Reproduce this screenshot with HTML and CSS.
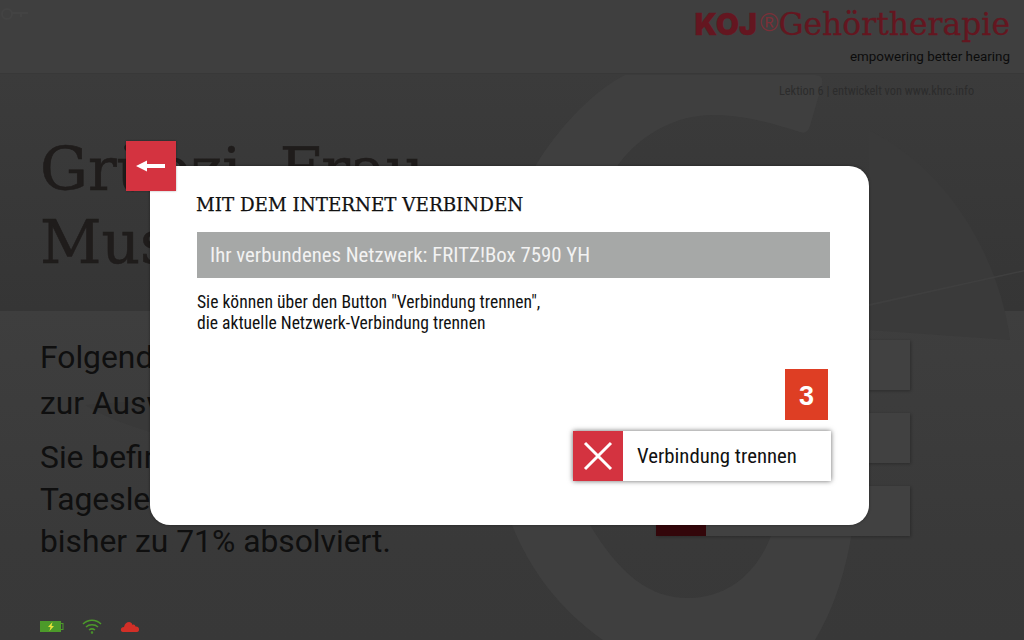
FILE: index.html
```html
<!doctype html>
<html>
  <head>
    <meta charset=utf-8>
    <title>Internet</title>
    <link rel="stylesheet" href="styles.css">
  </head>
  <body>
    <div class=screen>
      <svg class=backdrop viewBox="0 0 1024 640">
        <defs>
          <linearGradient id=upper x1=0 y1=0 x2=0 y2=1><stop offset=0 stop-color="#3b3b3b" /><stop offset=1 stop-color="#353535" /></linearGradient>
          <linearGradient id=lower x1=0 y1=0 x2=0 y2=1><stop offset=0 stop-color="#3e3e3e" /><stop offset=.7 stop-color="#393939" /><stop offset=1 stop-color="#383838" /></linearGradient>
        </defs>
        <rect x=0 y=74 width=1024 height=237 fill="url(#upper)" />
        <rect x=0 y=311 width=1024 height=329 fill="url(#lower)" />
        <path d="M85 405 C110 420 130 425 150 432 V400 Z" fill="#393939" />
        <path d="M869 130 C950 170 1000 260 1010 340 L869 330 Z" fill="#3a3a3a" />
        <path d="M869 304 L1024 270 V271.500 L869 306 Z" fill="#3f3f3f" />
        <path d="M536 165 C560 125 595 90 625 75 L815 75 Q824 75 822 84 L810 126 Q807 135 800 132 C770 122 740 115 713 115 C675 115 640 135 618 165 L590 525 C620 575 650 598 688 598 C730 598 760 570 773 530 L853 525 C845 580 830 615 815 640 L603 640 C560 610 530 570 512 525 Z" fill="#3f3f3f" />
      </svg>

      <header class=topbar>
        <svg class=topbar-mark width=28 height=14 viewBox="0 0 28 14"><circle cx=6 cy=6 r=5 fill=none stroke="#434343" stroke-width=2 /><path d="M11 5 H27 M20 5 V9" stroke="#434343" stroke-width=2 /></svg>
        <div class=brand>
          <div class=logo><b>KOJ</b><sup>®</sup><span>Gehörtherapie</span></div>
          <div class=claim>empowering better hearing</div>
        </div>
      </header>
      <div class=credit>Lektion 6 | entwickelt von www.khrc.info</div>

      <main class=home>
        <div class=left>
          <h1>Grüezi, Frau<br>Muster</h1>
          <p class=intro>Folgende Lektionen stehen<br>zur Auswahl</p>
          <p class="intro tight">Sie befinden sich in der<br>Tageslektion und haben sie<br>bisher zu 71% absolviert.</p>
        </div>
        <div class=menu>
          <div class=menu-btn><i></i></div>
          <div class=menu-btn><i></i></div>
          <div class=menu-btn><i class=red></i></div>
        </div>
      </main>

      <footer class=status>
        <svg width=24 height=13 viewBox="0 0 24 13">
          <rect x=.5 y=1.500 width=20 height=10 fill="#4c9a2a" stroke="#4c9a2a" />
          <rect x=20.500 y=3.500 width=2.500 height=6 fill=none stroke="#4c9a2a" />
          <path d="M12.500 2 L8 7 H10.500 L9.500 11 L14 6 H11.500 Z" fill="#e8e23a" />
        </svg>
        <svg width=20 height=15 viewBox="0 0 20 15" fill=none stroke="#4c9a2a" stroke-width=1.500>
          <path d="M1 5 C6 0 14 0 19 5" />
          <path d="M4 8 C7 5 13 5 16 8" />
          <path d="M7 11 C9 9.500 11 9.500 13 11" />
          <circle cx=10 cy=13.500 r=.5 />
        </svg>
        <svg width=20 height=13 viewBox="0 0 20 13">
          <path d="M3 12 C0 12 0 7 4 7 C5 2 11 0 12.500 5 C14 4 15 5 15.500 6.500 C20 6 20 12 17 12 Z" fill="#d22f27" />
        </svg>
      </footer>
    </div>

    <div class=dialog>
      <div class=back>
        <svg width=30 height=12 viewBox="0 0 30 12"><path d="M0 6 L11 .5 V4 H29 V8 H11 V11.500 Z" fill="#fff" /></svg>
      </div>
      <h2>MIT DEM INTERNET VERBINDEN</h2>
      <div class=network>Ihr verbundenes Netzwerk: FRITZ!Box 7590 YH</div>
      <p class=hint>Sie können über den Button "Verbindung trennen",<br>die aktuelle Netzwerk-Verbindung trennen</p>
      <div class=actions>
        <div class=step>3</div>
        <div class=disconnect>
          <span class=disconnect-icon>
            <svg width=30 height=30 viewBox="0 0 30 30"><path d="M2 2 L28 28 M28 2 L2 28" stroke="#fff" stroke-width=3 /></svg>
          </span>
          <span class=disconnect-label>Verbindung trennen</span>
        </div>
      </div>
    </div>
  </body>
</html>
```

FILE: styles.css
```css
* { box-sizing: border-box }
html, body { margin: 0; height: 100%; overflow: hidden }
body { position: relative; width: 1024px; height: 640px; font-family: 'Roboto', sans-serif }

/* page behind the dialog, already dimmed */
.screen { position: relative; width: 1024px; height: 640px; background: #383838; display: flex; flex-direction: column; overflow: hidden }
.backdrop { position: absolute; left: 0; top: 0; width: 1024px; height: 640px }

.topbar { position: relative; height: 74px; background: #3f3f3f; border-bottom: 1px solid #383838; display: flex; justify-content: flex-end; padding: 5px 14px 0 0 }
.topbar-mark { position: absolute; left: 1px; top: 8px }
.brand { text-align: right }
.logo { color: #641620; font-family: 'DejaVu Serif', serif; font-size: 31.400px; line-height: 38px; white-space: nowrap; -webkit-text-stroke: .3px #641620 }
.logo b { font-family: 'Inter', sans-serif; font-weight: 900; font-size: 30px }
.logo sup { font-size: 25px; font-family: 'Liberation Sans', sans-serif; margin: 0 0 0 3px; line-height: 0; vertical-align: 4px; -webkit-text-stroke: 0; color: #7a3038 }
.claim { font-size: 13.4px; line-height: 18px; color: #0c0c0c; margin-top: 5px }
.credit { position: absolute; top: 84px; left: 779px; font-size: 12.3px; color: #2c2c2c; font-stretch: 75% }

.home { position: relative; flex: 1; display: flex; justify-content: space-between; padding: 59px 114px 0 40px }
h1 { margin: 0 0 55px; font-family: 'DejaVu Serif', serif; font-weight: 400; font-size: 60px; line-height: 73px; color: #1f1c1b; -webkit-text-stroke: .6px #1f1c1b }
.intro { margin: 0 0 10px; font-size: 31.8px; line-height: 46px; color: #0f0f0f }
.intro.tight { line-height: 42px }
.menu { padding-top: 207px; display: flex; flex-direction: column; gap: 23px }
.menu-btn { width: 254px; height: 50px; background: #414141; box-shadow: 1px 1px 3px #0004 }
.menu-btn i { display: block; width: 50px; height: 50px }
.menu-btn i.red { background: #33060a }

.status { position: absolute; left: 40px; top: 619px; display: flex; align-items: center; gap: 18px }

.dialog { position: absolute; left: 150px; top: 166px; width: 719px; height: 359px; background: #fff; border-radius: 20px; padding: 25px 39px 0 46px; box-shadow: 0 0 3px #0006 }
.back { position: absolute; left: -24px; top: -25px; width: 50px; height: 50px; background: #d43340; display: flex; align-items: center; justify-content: center; box-shadow: 0 0 2px #0005 }
h2 { margin: 0; font-family: 'DejaVu Serif', serif; font-weight: 400; font-size: 18.3px; line-height: 28px; color: #111; -webkit-text-stroke: .25px #111 }
.network { margin: 13px 0 0 1px; height: 46px; background: #a6a8a7; color: #f2f2f2; font-size: 20.8px; line-height: 47px; padding-left: 13px; font-stretch: 75% }
.hint { margin: 14px 0 0 1px; font-size: 17.6px; line-height: 21px; color: #111; font-stretch: 75% }
.actions { position: absolute; right: 38px; top: 203px; display: flex; flex-direction: column; align-items: flex-end; gap: 11px }
.step { width: 43px; height: 51px; margin-right: 3px; background: #de3e24; color: #fff; font-family: 'Liberation Sans', sans-serif; font-weight: 700; font-size: 27px; line-height: 55px; text-align: center }
.disconnect { width: 258px; height: 50px; display: flex; align-items: center; background: #fff; box-shadow: 0 0 5px #0009 }
.disconnect-icon { width: 50px; height: 50px; background: #d43340; display: flex; align-items: center; justify-content: center }
.disconnect-label { margin-left: 14px; font-size: 20.8px; color: #111; font-stretch: 75% }
```
